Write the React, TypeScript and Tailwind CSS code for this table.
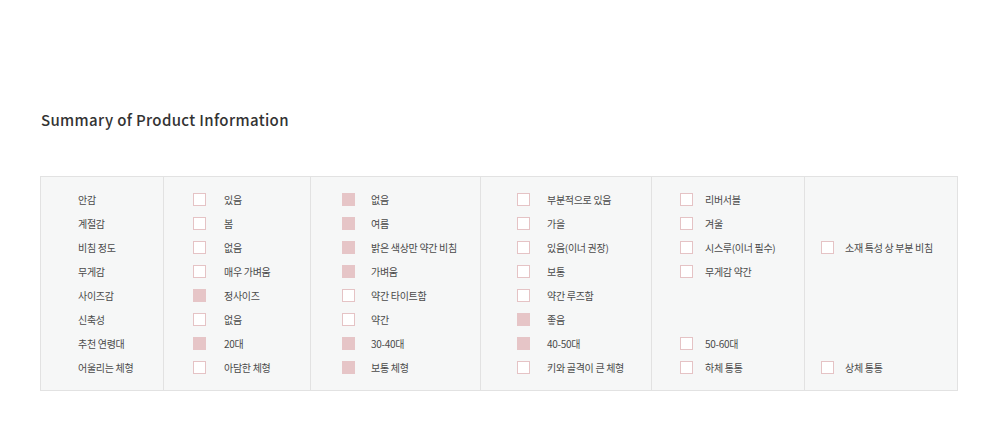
import React from 'react';

type Item = { text: string; on?: boolean } | null;

const labels = ['안감', '계절감', '비침 정도', '무게감', '사이즈감', '신축성', '추천 연령대', '어울리는 체형'];

// each column: list of 8 rows, null = empty row
const columns: { pad: string; gap: string; rows: Item[] }[] = [
  {
    pad: 'pl-[29px]',
    gap: 'ml-[18px]',
    rows: [
      { text: '있음' },
      { text: '봄' },
      { text: '없음' },
      { text: '매우 가벼움' },
      { text: '정사이즈', on: true },
      { text: '없음' },
      { text: '20대', on: true },
      { text: '아담한 체형' },
    ],
  },
  {
    pad: 'pl-[31px]',
    gap: 'ml-[16px]',
    rows: [
      { text: '없음', on: true },
      { text: '여름', on: true },
      { text: '밝은 색상만 약간 비침', on: true },
      { text: '가벼움', on: true },
      { text: '약간 타이트함' },
      { text: '약간' },
      { text: '30-40대', on: true },
      { text: '보통 체형', on: true },
    ],
  },
  {
    pad: 'pl-[36px]',
    gap: 'ml-[17px]',
    rows: [
      { text: '부분적으로 있음' },
      { text: '가을' },
      { text: '있음(이너 권장)' },
      { text: '보통' },
      { text: '약간 루즈함' },
      { text: '좋음', on: true },
      { text: '40-50대', on: true },
      { text: '키와 골격이 큰 체형' },
    ],
  },
  {
    pad: 'pl-[28px]',
    gap: 'ml-[12px]',
    rows: [
      { text: '리버서블' },
      { text: '겨울' },
      { text: '시스루(이너 필수)' },
      { text: '무게감 약간' },
      null,
      null,
      { text: '50-60대' },
      { text: '하체 통통' },
    ],
  },
  {
    pad: 'pl-[16px]',
    gap: 'ml-[11px]',
    rows: [
      null,
      null,
      { text: '소재 특성 상 부분 비침' },
      null,
      null,
      null,
      null,
      { text: '상체 통통' },
    ],
  },
];

const widths = ['w-[147px]', 'w-[170px]', 'w-[171px]', 'w-[153px]', 'flex-1'];

function Check({ item, gap }: { item: Item; gap: string }) {
  if (!item) return <div className="h-6" />;
  return (
    <div className="h-6 flex items-center">
      <span
        className={`w-[13px] h-[13px] shrink-0 border ${
          item.on ? 'bg-[#e6c5c7] border-[#e6c5c7]' : 'bg-white border-[#e5c3c5]'
        }`}
      />
      <span className={`${gap} text-[10px] tracking-[-0.3px] text-[#4a4a4a] whitespace-nowrap`}>{item.text}</span>
    </div>
  );
}

export default function App() {
  return (
    <div
      className="w-[1003px] h-[438px] bg-white overflow-hidden"
      style={{ fontFamily: '"Noto Sans CJK KR", "Noto Sans", sans-serif' }}
    >
      <div className="pt-[108px] pl-[41px]">
        <h2 className="text-[15px] font-medium text-[#333] leading-6 tracking-[0.35px]">
          Summary of Product Information
        </h2>
      </div>

      <div className="ml-[40px] mt-[44px] w-[918px] h-[215px] flex border border-[#e2e2e2] bg-[#f6f7f7]">
        {/* label column */}
        <div className="w-[123px] border-r border-[#e2e2e2] pt-[10px] pl-[37px]">
          {labels.map((l) => (
            <div key={l} className="h-6 flex items-center text-[10px] tracking-[-0.3px] text-[#4a4a4a] whitespace-nowrap">
              {l}
            </div>
          ))}
        </div>

        {columns.map((col, i) => (
          <div
            key={i}
            className={`${widths[i]} ${i < columns.length - 1 ? 'border-r border-[#e2e2e2]' : ''} pt-[10px] ${col.pad}`}
          >
            {col.rows.map((r, j) => (
              <Check key={j} item={r} gap={col.gap} />
            ))}
          </div>
        ))}
      </div>
    </div>
  );
}
